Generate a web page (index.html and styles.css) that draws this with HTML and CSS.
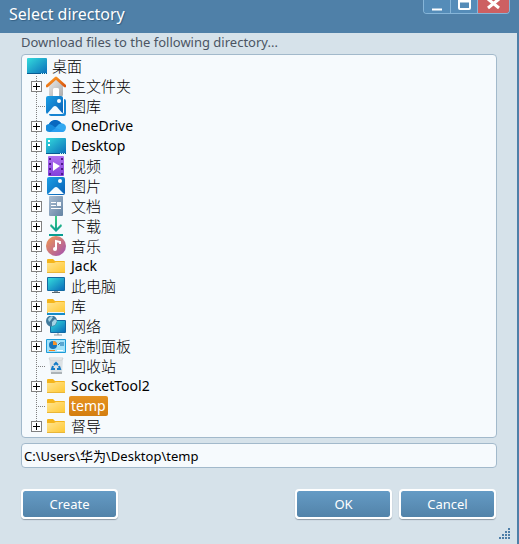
FILE: index.html
```html
<!DOCTYPE html>
<html lang="en">
<head>
  <meta charset="UTF-8">
  <meta name="viewport" content="width=device-width, initial-scale=1.0">
  <title>Select directory</title>
  <link rel="stylesheet" href="styles.css">
</head>
<body>
  <!-- Shared icon shapes -->
  <svg class="defs" width="0" height="0" aria-hidden="true">
    <defs>
      <linearGradient id="teal" x1="0" y1="0" x2="1" y2="1">
        <stop offset="0" stop-color="#34dcdc"/><stop offset="1" stop-color="#0a6cba"/>
      </linearGradient>
      <linearGradient id="blue" x1="0" y1="0" x2="1" y2="1">
        <stop offset="0" stop-color="#1aa0e6"/><stop offset="1" stop-color="#0a5fb4"/>
      </linearGradient>
      <linearGradient id="purple" x1="0" y1="0" x2="0" y2="1">
        <stop offset="0" stop-color="#b070f0"/><stop offset="1" stop-color="#8440dc"/>
      </linearGradient>
      <linearGradient id="slate" x1="0" y1="0" x2="1" y2="1">
        <stop offset="0" stop-color="#a9bdd2"/><stop offset="1" stop-color="#6483a3"/>
      </linearGradient>
      <linearGradient id="green" x1="0" y1="0" x2="0" y2="1">
        <stop offset="0" stop-color="#3fce80"/><stop offset="1" stop-color="#0a9c92"/>
      </linearGradient>
      <linearGradient id="sunset" x1="0" y1="0" x2="1" y2="1">
        <stop offset="0" stop-color="#f39a4e"/><stop offset="1" stop-color="#a04fb4"/>
      </linearGradient>
      <linearGradient id="yellow" x1="0" y1="0" x2="1" y2="1">
        <stop offset="0" stop-color="#ffe492"/><stop offset="1" stop-color="#ffc831"/>
      </linearGradient>
      <linearGradient id="wall" x1="0" y1="0" x2="1" y2="1">
        <stop offset="0" stop-color="#ececec"/><stop offset="1" stop-color="#ababab"/>
      </linearGradient>
      <linearGradient id="roof" x1="0" y1="0" x2="1" y2="1">
        <stop offset="0" stop-color="#ff9c24"/><stop offset="1" stop-color="#d95610"/>
      </linearGradient>
    </defs>
    <symbol id="icon-folder" viewBox="0 0 20 20">
      <path d="M1 4q0-1 1-1h5l2 2h9q1 0 1 1v4H1z" fill="#f5b51b"/>
      <path d="M1 7h7l2-1h8q1 0 1 1v9q0 1-1 1H2q-1 0-1-1z" fill="url(#yellow)"/>
      <path d="M1 16.500h18" stroke="#e9b638"/>
    </symbol>
    <symbol id="icon-desktop" viewBox="0 0 20 20">
      <rect y="2" width="20" height="16" rx="1" fill="url(#teal)"/>
      <path d="M0 17.500h20" stroke="#075b92"/>
      <path d="M14 17.500h1m1 0h1m1 0h1" stroke="#bff4ff"/>
    </symbol>
  </svg>

  <main class="dialog">
    <header class="titlebar">
      <h1 class="title">Select directory</h1>
      <div class="window-buttons">
        <button type="button" class="window-button" aria-label="Minimize">
          <svg width="26" height="13"><path d="M8 9.500h10" stroke="#fff" stroke-width="2"/></svg>
        </button>
        <button type="button" class="window-button" aria-label="Maximize">
          <svg width="26" height="13"><rect x="8" y="-2" width="11" height="11" rx="1" fill="none" stroke="#fff" stroke-width="2"/><path d="M8 1h11" stroke="#fff" stroke-width="3"/></svg>
        </button>
        <button type="button" class="window-button close" aria-label="Close">
          <svg width="31" height="13"><path d="M10-1l11 9M21-1L10 8" stroke="#fff" stroke-width="3"/></svg>
        </button>
      </div>
    </header>

    <form class="content">
      <label class="caption" for="path">Download files to the following directory...</label>

      <ul class="tree">
        <li class="root">
          <svg class="icon"><use href="#icon-desktop"/></svg>
          <span class="name" lang="zh">桌面</span>
        </li>
        <li class="node">
          <button type="button" class="toggle" aria-label="Expand 主文件夹"></button>
          <svg class="icon" viewBox="0 0 20 20"><path d="M3 9l7-7 7 7v10q0 1-1 1h-3v-6q0-2-2-2H9q-2 0-2 2v6H4q-1 0-1-1z" fill="url(#wall)"/><path d="M7 20v-6q0-2 2-2h2q2 0 2 2v6z" fill="#fff"/><path d="M1 10l9-8 9 8" fill="none" stroke="url(#roof)" stroke-width="3" stroke-linejoin="round" stroke-linecap="round"/></svg>
          <span class="name" lang="zh">主文件夹</span>
        </li>
        <li class="node">
          <span class="branch"></span>
          <svg class="icon" viewBox="0 0 20 20"><rect x="3" y="3" width="17" height="17" rx="2" fill="#1684d2"/><rect width="18" height="18" rx="2" fill="#fff"/><rect width="17" height="18" rx="2" fill="url(#blue)"/><circle cx="13" cy="5" r="2" fill="#fff"/><path d="M1 18l6-7q2-2 4 0l6 7z" fill="#f4fbff"/></svg>
          <span class="name" lang="zh">图库</span>
        </li>
        <li class="node">
          <button type="button" class="toggle" aria-label="Expand OneDrive"></button>
          <svg class="icon" viewBox="0 0 20 20"><path d="M4 16a4 4 0 0 1-1-8 7 7 0 0 1 12-1 5 5 0 0 1 1 9z" fill="#168bdc"/><path d="M3 8a7 7 0 0 1 12-1l-5 5-4-3z" fill="#0868bf"/><path d="M9 12l4-4q6-2 7 3 0 5-4 5z" fill="#32a9f1"/><path d="M4 16l6-4 8 3q-1 1-2 1z" fill="#2b9ff1"/></svg>
          <span class="name">OneDrive</span>
        </li>
        <li class="node">
          <button type="button" class="toggle" aria-label="Expand Desktop"></button>
          <svg class="icon" viewBox="0 0 20 20"><use href="#icon-desktop"/><path d="M3 4v2m0 2v2" stroke="#fff" stroke-width="2"/></svg>
          <span class="name">Desktop</span>
        </li>
        <li class="node">
          <button type="button" class="toggle" aria-label="Expand 视频"></button>
          <svg class="icon" viewBox="0 0 20 20"><rect x="2" width="16" height="20" rx="1" fill="url(#purple)"/><path d="M4 2v17M16 2v17" stroke="#4c1988" stroke-width="2" stroke-dasharray="2 3"/><path d="M7 6l7 4-7 5z" fill="#fff"/></svg>
          <span class="name" lang="zh">视频</span>
        </li>
        <li class="node">
          <button type="button" class="toggle" aria-label="Expand 图片"></button>
          <svg class="icon" viewBox="0 0 20 20"><rect x="1" y="1" width="18" height="18" rx="2" fill="url(#blue)"/><circle cx="14" cy="5" r="2" fill="#fff"/><path d="M2 18l6-6q2-2 4 0l6 6z" fill="#f7fcff"/></svg>
          <span class="name" lang="zh">图片</span>
        </li>
        <li class="node">
          <button type="button" class="toggle" aria-label="Expand 文档"></button>
          <svg class="icon" viewBox="0 0 20 20"><rect x="3" width="14" height="20" rx="1" fill="url(#slate)"/><path d="M5 6.500h5M5 9.500h5M5 12.500h10" stroke="#fff"/><rect x="11" y="6" width="4" height="4" fill="#f4f8fc"/></svg>
          <span class="name" lang="zh">文档</span>
        </li>
        <li class="node">
          <button type="button" class="toggle" aria-label="Expand 下载"></button>
          <svg class="icon" viewBox="0 0 20 20"><path d="M9 0h2v12l4-4 1 2-6 6-6-6 1-2 4 4z" fill="url(#green)"/><path d="M3 19h14" stroke="#079d91" stroke-width="2"/></svg>
          <span class="name" lang="zh">下载</span>
        </li>
        <li class="node">
          <button type="button" class="toggle" aria-label="Expand 音乐"></button>
          <svg class="icon" viewBox="0 0 20 20"><circle cx="10" cy="10" r="10" fill="url(#sunset)"/><circle cx="9" cy="13" r="2" fill="#fff"/><path d="M10 13V5l4 1v2" fill="none" stroke="#fff" stroke-width="2"/></svg>
          <span class="name" lang="zh">音乐</span>
        </li>
        <li class="node">
          <button type="button" class="toggle" aria-label="Expand Jack"></button>
          <svg class="icon"><use href="#icon-folder"/></svg>
          <span class="name">Jack</span>
        </li>
        <li class="node">
          <button type="button" class="toggle" aria-label="Expand 此电脑"></button>
          <svg class="icon" viewBox="0 0 20 20"><rect x="1" y="1" width="18" height="14" rx="1" fill="#126aa3"/><rect x="2" y="2" width="16" height="12" fill="url(#teal)"/><path d="M8 15h4v1H8z" fill="#8799a5"/><path d="M6 16.500h8" stroke="#56656f"/></svg>
          <span class="name" lang="zh">此电脑</span>
        </li>
        <li class="node">
          <button type="button" class="toggle" aria-label="Expand 库"></button>
          <svg class="icon" viewBox="0 0 20 20"><use href="#icon-folder"/><path d="M2 16.500h16" stroke="#e8f7ff"/><path d="M1 18h18" stroke="#168bc8" stroke-width="2"/></svg>
          <span class="name" lang="zh">库</span>
        </li>
        <li class="node">
          <button type="button" class="toggle" aria-label="Expand 网络"></button>
          <svg class="icon" viewBox="0 0 20 20"><rect x="4" y="4" width="16" height="13" rx="1" fill="#126aa3"/><rect x="5" y="5" width="14" height="11" fill="url(#teal)"/><path d="M8 19h8m-4-2v2" stroke="#8796a0"/><circle cx="5.500" cy="5" r="5.500" fill="#407a9c"/><path d="M2 3q3-4 5-2l-2 3-2 2zM6 6l3-3 2 2-2 4-3 1z" fill="#a4d4e6"/></svg>
          <span class="name" lang="zh">网络</span>
        </li>
        <li class="node">
          <button type="button" class="toggle" aria-label="Expand 控制面板"></button>
          <svg class="icon" viewBox="0 0 20 20"><rect y="3" width="20" height="14" rx="1" fill="#1c9bd7"/><rect x="1" y="4" width="18" height="12" fill="#a2e2fa"/><circle cx="7" cy="9" r="4" fill="#1975ba"/><path d="M7 9V5a4 4 0 0 1 4 4z" fill="#f89128"/><path d="M12 9l2-2m1 3V6m2 0v4" stroke="#126ba7"/><path d="M3 14.500h6" stroke="#f08220"/><path d="M11 14.500h6" stroke="#fff"/></svg>
          <span class="name" lang="zh">控制面板</span>
        </li>
        <li class="node">
          <span class="branch"></span>
          <svg class="icon" viewBox="0 0 20 20"><path d="M3 2h14l-1 16H5z" fill="#dce1e4"/><path d="M3 2h14l-1 2H4z" fill="#f5f6f6" stroke="#cfd4d7"/><path d="M5 17h11" stroke="#acb3b7" stroke-width="2"/><path d="M8 9l2-2 2 2m1 1l1 3h-3m-2 0H6l1-3" fill="none" stroke="#147bc7" stroke-width="2"/></svg>
          <span class="name" lang="zh">回收站</span>
        </li>
        <li class="node">
          <button type="button" class="toggle" aria-label="Expand SocketTool2"></button>
          <svg class="icon"><use href="#icon-folder"/></svg>
          <span class="name">SocketTool2</span>
        </li>
        <li class="node">
          <span class="branch"></span>
          <svg class="icon"><use href="#icon-folder"/></svg>
          <span class="name selected">temp</span>
        </li>
        <li class="node">
          <button type="button" class="toggle" aria-label="Expand 督导"></button>
          <svg class="icon"><use href="#icon-folder"/></svg>
          <span class="name" lang="zh">督导</span>
        </li>
      </ul>

      <input class="path" id="path" type="text" value="C:\Users\华为\Desktop\temp">

      <div class="actions">
        <button type="button" class="action create">Create</button>
        <button type="button" class="action">OK</button>
        <button type="button" class="action">Cancel</button>
      </div>
    </form>

    <svg class="grip" width="12" height="12" aria-hidden="true">
      <path d="M9 1h2M6 4h2m1 0h2M3 7h2m1 0h2m1 0h2M0 10h2m1 0h2m1 0h2m1 0h2" stroke="#4d7ea8" stroke-width="2"/>
    </svg>
  </main>
</body>
</html>
```
FILE: styles.css
```css
* {
  box-sizing: border-box;
}
body {
  margin: 0;
  font-family: "Noto Sans", "Noto Sans CJK SC", sans-serif;
  font-size: 13px;
  color: #000;
}
.defs {
  position: absolute;
}
.dialog {
  position: relative;
  min-height: 100vh;
  background-color: #d6e2ea;
  border-right: 2px solid #4f80a8;
}
.titlebar {
  display: flex;
  justify-content: space-between;
  align-items: flex-start;
  height: 33px;
  margin-right: -2px;
  padding: 0 9px;
  background-color: #4f80a8;
}
.title {
  margin: 0;
  font-size: 16px;
  font-weight: normal;
  line-height: 28px;
  color: #fff;
  text-shadow: 1px 1px 1px #345f83;
}
.window-buttons {
  display: flex;
  height: 14px;
  border: 1px solid #86b5d8;
  border-top: 0;
  border-radius: 0 0 4px 4px;
  overflow: hidden;
}
.window-button {
  display: flex;
  padding: 0;
  border: 0;
  background-color: #558cb8;
}
.window-button + .window-button {
  border-left: 1px solid #86b5d8;
}
.window-button.close {
  background-color: #cd6062;
}
.content {
  display: flex;
  flex-direction: column;
  padding: 0 20px 0 21px;
}
.caption {
  height: 21px;
  line-height: 18px;
  color: #4b5563;
}
.tree {
  margin: 0;
  padding: 1px 5px;
  list-style: none;
  background-color: #f6fafd;
  border: 1px solid #a2b9cb;
  border-radius: 4px;
}
.root,
.node {
  display: flex;
  align-items: center;
  height: 20px;
}
/* Vertical dotted line that joins the nodes */
.node {
  padding-left: 4px;
  background: repeating-linear-gradient(#808080 0 1px, transparent 1px 2px) 9px 0 / 1px 100% no-repeat;
}
.node:last-child {
  background-size: 1px 50%;
}
.toggle {
  width: 11px;
  height: 11px;
  margin-right: 4px;
  padding: 0;
  border: 1px solid #808080;
  background:
    linear-gradient(#000, #000) center / 7px 1px no-repeat,
    linear-gradient(#000, #000) center / 1px 7px no-repeat,
    #fff;
}
.branch {
  width: 10px;
  height: 1px;
  margin-left: 5px;
  background: repeating-linear-gradient(90deg, #808080 0 1px, transparent 1px 2px);
}
.icon {
  flex: none;
  width: 20px;
  height: 20px;
}
.name {
  height: 20px;
  margin-left: 3px;
  padding: 0 2px;
  font-size: 14px;
  line-height: 20px;
  white-space: nowrap;
}
/* Chinese names are a little larger and thinner than Latin ones */
.name:lang(zh) {
  font-family: "Noto Sans CJK SC", sans-serif;
  font-size: 15px;
  font-weight: 300;
}
.selected {
  color: #fff;
  background: linear-gradient(#e69320, #d37d10);
  border-radius: 2px;
}
.path {
  width: 100%;
  height: 25px;
  margin-top: 5px;
  padding: 0 2px;
  font-family: inherit;
  font-size: 13px;
  color: #000;
  background-color: #f6fafd;
  border: 1px solid #a2b9cb;
  border-radius: 4px;
}
.actions {
  display: flex;
  gap: 7px;
  margin-top: 21px;
  padding-right: 1px;
}
.action {
  width: 97px;
  height: 30px;
  padding: 0;
  font-family: inherit;
  font-size: 13px;
  color: #fff;
  background: linear-gradient(#659bc5, #5283a9) padding-box;
  border: 2px solid #fff;
  border-radius: 4px;
  box-shadow: 0 1px 1px #8f9ba5;
}
.create {
  margin-right: auto;
}
.grip {
  position: absolute;
  right: 6px;
  bottom: 4px;
}
```
